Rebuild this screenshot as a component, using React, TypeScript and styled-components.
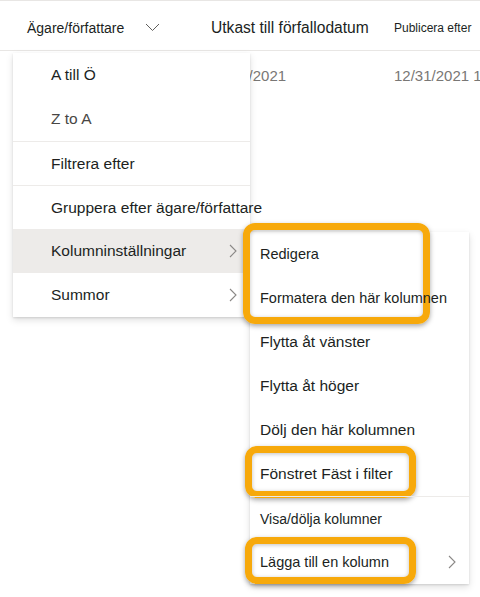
import React from "react";
import styled, { createGlobalStyle } from "styled-components";

const GlobalStyle = createGlobalStyle`
  html, body { margin: 0; padding: 0; background: #ffffff; }
  body { font-family: "Liberation Sans", Arial, sans-serif; color: #201f1e; }
`;

const Page = styled.div`
  position: relative;
  width: 480px;
  height: 597px;
  overflow: hidden;
  background: #ffffff;
`;

const Row = styled.div<{ $header?: boolean }>`
  display: grid;
  grid-template-columns: 211px 183px 1fr;
  height: ${(p) => (p.$header ? "51px" : "50px")};
  align-items: center;
  border-top: ${(p) => (p.$header ? "1px solid #e8e6e4" : "none")};
  border-bottom: ${(p) => (p.$header ? "1px solid #e8e6e4" : "none")};
  white-space: nowrap;
  padding-top: ${(p) => (p.$header ? "4px" : "0")};
  box-sizing: border-box;
`;

const HeadCell = styled.div<{ $size: number; $pad?: number }>`
  display: flex;
  align-items: center;
  font-size: ${(p) => p.$size}px;
  color: #201f1e;
  padding-left: ${(p) => p.$pad ?? 0}px;
  overflow: hidden;
`;

const HeadChevron = styled.svg`
  margin-left: 21px;
  flex: none;
`;

const Cell = styled.div`
  font-size: 15px;
  color: #797775;
  overflow: hidden;
  padding-bottom: 2px;
`;

const Menu = styled.div<{ $left: number; $top: number; $width: number }>`
  position: absolute;
  left: ${(p) => p.$left}px;
  top: ${(p) => p.$top}px;
  width: ${(p) => p.$width}px;
  background: #ffffff;
  box-shadow: 0 3.2px 7.2px rgba(0, 0, 0, 0.13), 0 0.6px 1.8px rgba(0, 0, 0, 0.11);
  z-index: 1;
`;

const Item = styled.div<{ $active?: boolean; $pad: number; $size?: number; $muted?: boolean; $divider?: boolean }>`
  position: relative;
  z-index: 1;
  display: flex;
  align-items: center;
  justify-content: space-between;
  height: 44px;
  box-sizing: border-box;
  padding-left: ${(p) => p.$pad}px;
  padding-right: 13px;
  font-size: ${(p) => p.$size ?? 15.5}px;
  color: ${(p) => (p.$muted ? "#484644" : "#201f1e")};
  background: ${(p) => (p.$active ? "#edebe9" : "transparent")};
  border-top: ${(p) => (p.$divider ? "1px solid #edebe9" : "none")};
  white-space: nowrap;
`;

const Chevron = styled.svg`
  flex: none;
`;

const Highlight = styled.div<{ $t: number; $b: number; $l: number; $r: number }>`
  position: relative;
  &::before {
    content: "";
    position: absolute;
    top: ${(p) => p.$t}px;
    bottom: ${(p) => p.$b}px;
    left: ${(p) => p.$l}px;
    right: ${(p) => p.$r}px;
    border: 7px solid #f7a90b;
    border-radius: 12px;
    box-shadow: 0 2px 5px rgba(0, 0, 0, 0.35), inset 0 1px 4px rgba(0, 0, 0, 0.25);
    z-index: 0;
    pointer-events: none;
  }
`;

const RightChevron = () => (
  <Chevron width="8" height="14" viewBox="0 0 8 14">
    <path d="M1 1 L7 7 L1 13" fill="none" stroke="#8a8886" strokeWidth="1.1" />
  </Chevron>
);

export default function App() {
  return (
    <Page>
      <GlobalStyle />
      <Row $header>
        <HeadCell $size={14} $pad={27}>
          Ägare/författare
          <HeadChevron width="15" height="9" viewBox="0 0 15 9">
            <path d="M1 1 L7.5 7.5 L14 1" fill="none" stroke="#605e5c" strokeWidth="1" />
          </HeadChevron>
        </HeadCell>
        <HeadCell $size={15.6}>Utkast till förfallodatum</HeadCell>
        <HeadCell $size={12}>Publicera efter</HeadCell>
      </Row>
      <Row>
        <Cell />
        <Cell>12/31/2021</Cell>
        <Cell>12/31/2021 12:00 AM</Cell>
      </Row>

      <Menu $left={13} $top={53} $width={237}>
        <Item $pad={38}>A till Ö</Item>
        <Item $pad={38} $muted>Z to A</Item>
        <Item $pad={38} $divider>Filtrera efter</Item>
        <Item $pad={38} $divider>Gruppera efter ägare/författare</Item>
        <Item $pad={38} $active>
          Kolumninställningar
          <RightChevron />
        </Item>
        <Item $pad={38}>
          Summor
          <RightChevron />
        </Item>
      </Menu>

      <Menu $left={250} $top={232} $width={219}>
        <Highlight $t={-9} $b={-4} $l={-7} $r={39}>
          <Item $pad={10} $size={14.5}>Redigera</Item>
          <Item $pad={10} $size={14.5}>Formatera den här kolumnen</Item>
        </Highlight>
        <Item $pad={10} $size={15.5}>Flytta åt vänster</Item>
        <Item $pad={10} $size={15.5}>Flytta åt höger</Item>
        <Item $pad={10} $size={15.5}>Dölj den här kolumnen</Item>
        <Highlight $t={-6} $b={-2} $l={-5} $r={53}>
          <Item $pad={10} $size={15.5}>Fönstret Fäst i filter</Item>
        </Highlight>
        <Item $pad={10} $size={14} $divider>Visa/dölja kolumner</Item>
        <Highlight $t={-3} $b={0} $l={-5} $r={53}>
          <Item $pad={10} $size={14.5}>
            Lägga till en kolumn
            <RightChevron />
          </Item>
        </Highlight>
      </Menu>
    </Page>
  );
}
